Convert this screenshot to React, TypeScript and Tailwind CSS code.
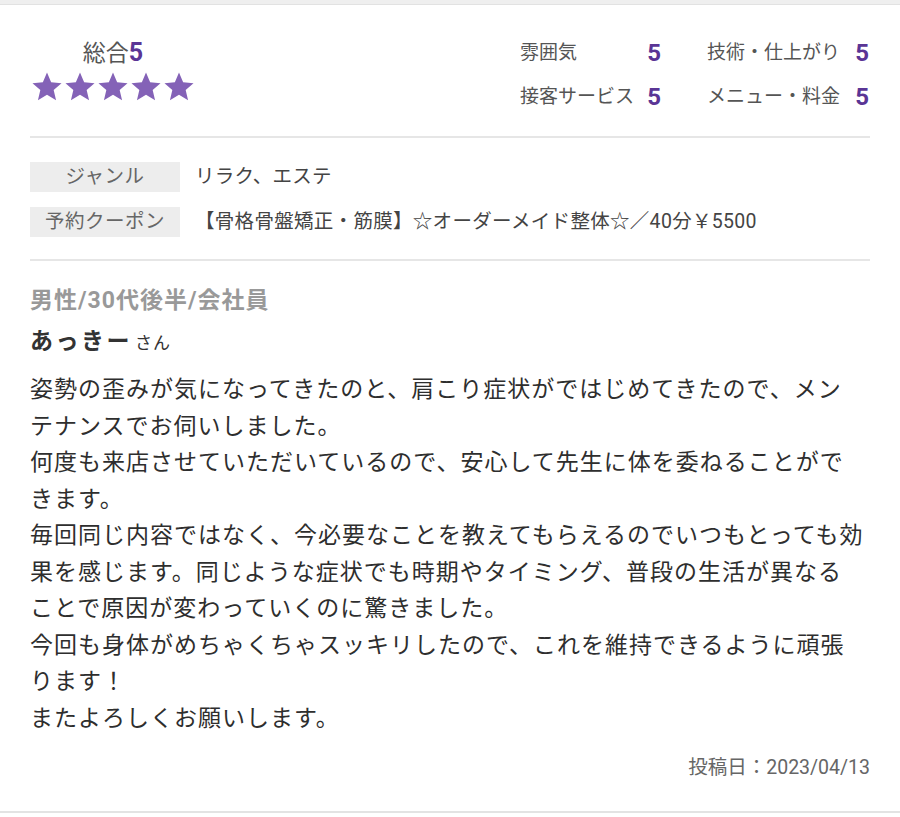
const FONT = "font-['Roboto','Noto_Sans_CJK_JP',sans-serif]";

const SCORES: [string, number][] = [
  ["雰囲気", 5],
  ["技術・仕上がり", 5],
  ["接客サービス", 5],
  ["メニュー・料金", 5],
];

const INFO: [string, string][] = [
  ["ジャンル", "リラク、エステ"],
  ["予約クーポン", "【骨格骨盤矯正・筋膜】☆オーダーメイド整体☆／40分￥5500"],
];

const BODY = [
  "姿勢の歪みが気になってきたのと、肩こり症状がではじめてきたので、メン",
  "テナンスでお伺いしました。",
  "何度も来店させていただいているので、安心して先生に体を委ねることがで",
  "きます。",
  "毎回同じ内容ではなく、今必要なことを教えてもらえるのでいつもとっても効",
  "果を感じます。同じような症状でも時期やタイミング、普段の生活が異なる",
  "ことで原因が変わっていくのに驚きました。",
  "今回も身体がめちゃくちゃスッキリしたので、これを維持できるように頑張",
  "ります！",
  "またよろしくお願いします。",
];

function Star() {
  return (
    <svg width="32" height="32" viewBox="0 0 24 24" className="shrink-0">
      <path
        d="M12 1.2l3.1 7.2 7.8.7-5.9 5.2 1.8 7.7L12 17.9 5.2 22l1.8-7.7L1.1 9.1l7.8-.7z"
        fill="#8462b7"
      />
    </svg>
  );
}

export default function App() {
  return (
    <div className={`${FONT} bg-white w-[900px] h-[817px] overflow-hidden`}>
      <div className="h-[5px] bg-[#efefef] border-b border-[#e2e2e2]" />

      <div className="px-[30px]">
        {/* Scores */}
        <div className="flex items-start justify-between pt-[34px] pb-[25px]">
          <div className="flex flex-col items-center w-[166px]">
            <p className="h-[28px] leading-[28px] text-[23px] text-[#555]">
              総合<span className="text-[25px] font-bold text-[#5a3595]">5</span>
            </p>
            <div className="flex gap-[1px] mt-[4px]">
              {[0, 1, 2, 3, 4].map((i) => (
                <Star key={i} />
              ))}
            </div>
          </div>
          <div className="grid grid-cols-[141px_162px] gap-x-[46px] gap-y-[16px] mr-[1px]">
            {SCORES.map(([label, score]) => (
              <div key={label} className="flex items-center justify-between h-[28px]">
                <span className="text-[19px] text-[#555]">{label}</span>
                <span className="text-[24px] font-bold text-[#5a3595] leading-none">{score}</span>
              </div>
            ))}
          </div>
        </div>

        <div className="h-[2px] bg-[#e6e6e6]" />

        {/* Info */}
        <div className="flex flex-col gap-[15px] pt-[24px] pb-[22px]">
          {INFO.map(([label, value]) => (
            <div key={label} className="flex items-center">
              <div className="w-[150px] h-[30px] bg-[#ededed] flex items-center justify-center text-[19.5px] tracking-[0.5px] text-[#666]">
                {label}
              </div>
              <div className="ml-[15px] text-[19.5px] tracking-[0.3px] text-[#444] whitespace-nowrap">
                {value}
              </div>
            </div>
          ))}
        </div>

        <div className="h-[2px] bg-[#e6e6e6]" />

        {/* Review */}
        <p className="mt-[25px] h-[30px] leading-[30px] text-[23px] tracking-[1px] font-bold text-[#999]">
          男性/30代後半/会社員
        </p>
        <p className="mt-[11px] h-[30px] leading-[30px] text-[23px] tracking-[2.5px] font-bold text-[#333]">
          あっきー
          <span className="ml-[3px] text-[17px] font-normal tracking-[1px]">さん</span>
        </p>
        <div className="mt-[15px] text-[23px] tracking-[1px] leading-[36.5px] text-[#2e2e2e]">
          {BODY.map((line, i) => (
            <div key={i} className="whitespace-nowrap">
              {line}
            </div>
          ))}
        </div>
        <p className="mt-[18px] h-[26px] leading-[26px] text-right text-[19.5px] text-[#666]">
          投稿日：2023/04/13
        </p>
      </div>

      <div className="mt-[30px] h-[2px] bg-[#e3e3e3]" />
    </div>
  );
}
